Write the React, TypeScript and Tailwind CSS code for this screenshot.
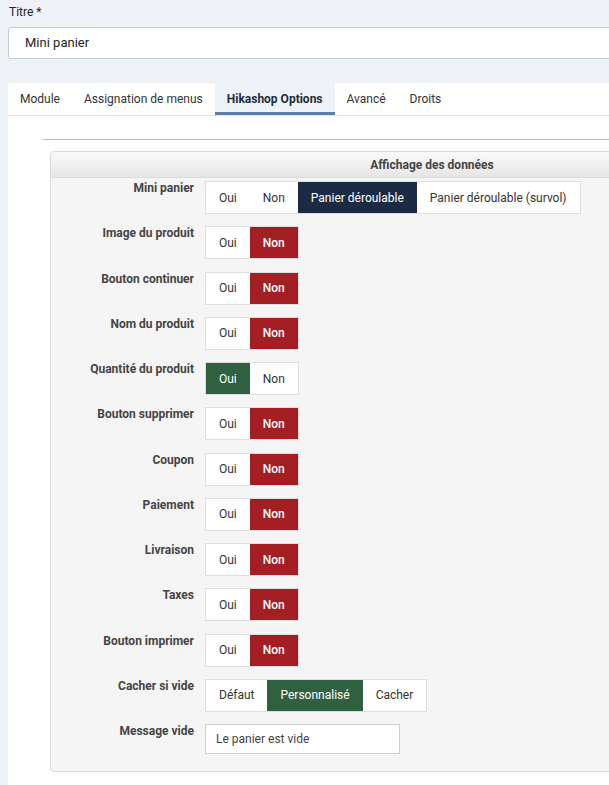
import React from 'react';

type Choice = { label: string; active?: 'navy' | 'red' | 'green' };

const rows: { label: string; choices: Choice[] }[] = [
    {
        label: 'Mini panier',
        choices: [
            { label: 'Oui' },
            { label: 'Non' },
            { label: 'Panier déroulable', active: 'navy' },
            { label: 'Panier déroulable (survol)' },
        ],
    },
    { label: 'Image du produit', choices: [{ label: 'Oui' }, { label: 'Non', active: 'red' }] },
    { label: 'Bouton continuer', choices: [{ label: 'Oui' }, { label: 'Non', active: 'red' }] },
    { label: 'Nom du produit', choices: [{ label: 'Oui' }, { label: 'Non', active: 'red' }] },
    { label: 'Quantité du produit', choices: [{ label: 'Oui', active: 'green' }, { label: 'Non' }] },
    { label: 'Bouton supprimer', choices: [{ label: 'Oui' }, { label: 'Non', active: 'red' }] },
    { label: 'Coupon', choices: [{ label: 'Oui' }, { label: 'Non', active: 'red' }] },
    { label: 'Paiement', choices: [{ label: 'Oui' }, { label: 'Non', active: 'red' }] },
    { label: 'Livraison', choices: [{ label: 'Oui' }, { label: 'Non', active: 'red' }] },
    { label: 'Taxes', choices: [{ label: 'Oui' }, { label: 'Non', active: 'red' }] },
    { label: 'Bouton imprimer', choices: [{ label: 'Oui' }, { label: 'Non', active: 'red' }] },
    {
        label: 'Cacher si vide',
        choices: [{ label: 'Défaut' }, { label: 'Personnalisé', active: 'green' }, { label: 'Cacher' }],
    },
];

const tabs = ['Module', 'Assignation de menus', 'Hikashop Options', 'Avancé', 'Droits'];

const activeClass = {
    navy: 'bg-[#1c2b44] text-white',
    red: 'bg-[#a31f24] text-white font-medium',
    green: 'bg-[#2f6140] text-white',
};

const ButtonGroup = ({ choices }: { choices: Choice[] }) => (
    <div className="flex h-[33px] border border-[#dedede] bg-white">
        {choices.map((c) => (
            <span
                key={c.label}
                className={`flex items-center px-[13px] text-[12px] ${c.active ? activeClass[c.active] : 'text-[#333]'}`}
            >
                {c.label}
            </span>
        ))}
    </div>
);

export default function App() {
    return (
        <div
            className="w-[609px] h-[785px] overflow-hidden bg-[#eef2f6] text-[#22262a]"
            style={{ fontFamily: 'Roboto, "Liberation Sans", sans-serif' }}
        >
            {/* Titre */}
            <div className="pl-[9px] pt-[5px] text-[12px] leading-[14px]">Titre *</div>
            <div className="ml-[8px] mt-[8px] w-[700px] h-[32px] flex items-center pl-[16px] bg-white border border-[#c5cbd1] rounded-[3px] text-[13px]">
                Mini panier
            </div>

            {/* Onglets + contenu */}
            <div className="ml-[8px] mt-[24px] w-[700px] h-[702px] bg-white">
                <div className="flex h-[33px] border-b border-[#dfe3e7]">
                    {tabs.map((t) => (
                        <div
                            key={t}
                            className={`flex items-center px-[12px] text-[12px] ${
                                t === 'Hikashop Options'
                                    ? 'bg-[#eef3f8] font-bold text-[#1f2d3d] border-b-[3px] border-[#5d7fa6] pt-[3px]'
                                    : 'text-[#333]'
                            }`}
                        >
                            {t}
                        </div>
                    ))}
                </div>

                <div className="ml-[35px] mt-[23px] border-t border-[#bfbfbf]" />

                <div className="ml-[42px] mt-[11px] w-[764px] bg-[#f5f5f5] border border-[#dcdcdc] rounded-[4px] pb-[17px]">
                    <div className="h-[26px] flex items-center justify-center bg-gradient-to-b from-[#fafafa] to-[#e6e6e6] border-b border-[#dcdcdc] rounded-t-[4px] text-[12px] font-bold text-[#444]">
                        Affichage des données
                    </div>
                    <div className="flex flex-col gap-[12.25px] pt-[3px]">
                        {rows.map((r) => (
                            <div key={r.label} className="flex items-start">
                                <div className="w-[143px] text-right text-[12px] leading-[14px] font-bold text-[#444]">
                                    {r.label}
                                </div>
                                <div className="ml-[11px]">
                                    <ButtonGroup choices={r.choices} />
                                </div>
                            </div>
                        ))}
                        <div className="flex items-start">
                            <div className="w-[143px] text-right text-[12px] leading-[14px] font-bold text-[#444]">
                                Message vide
                            </div>
                            <div className="ml-[11px] w-[195px] h-[30px] flex items-center pl-[10px] bg-white border border-[#cfcfcf] text-[12px] text-[#444]">
                                Le panier est vide
                            </div>
                        </div>
                    </div>
                </div>
            </div>
        </div>
    );
}
